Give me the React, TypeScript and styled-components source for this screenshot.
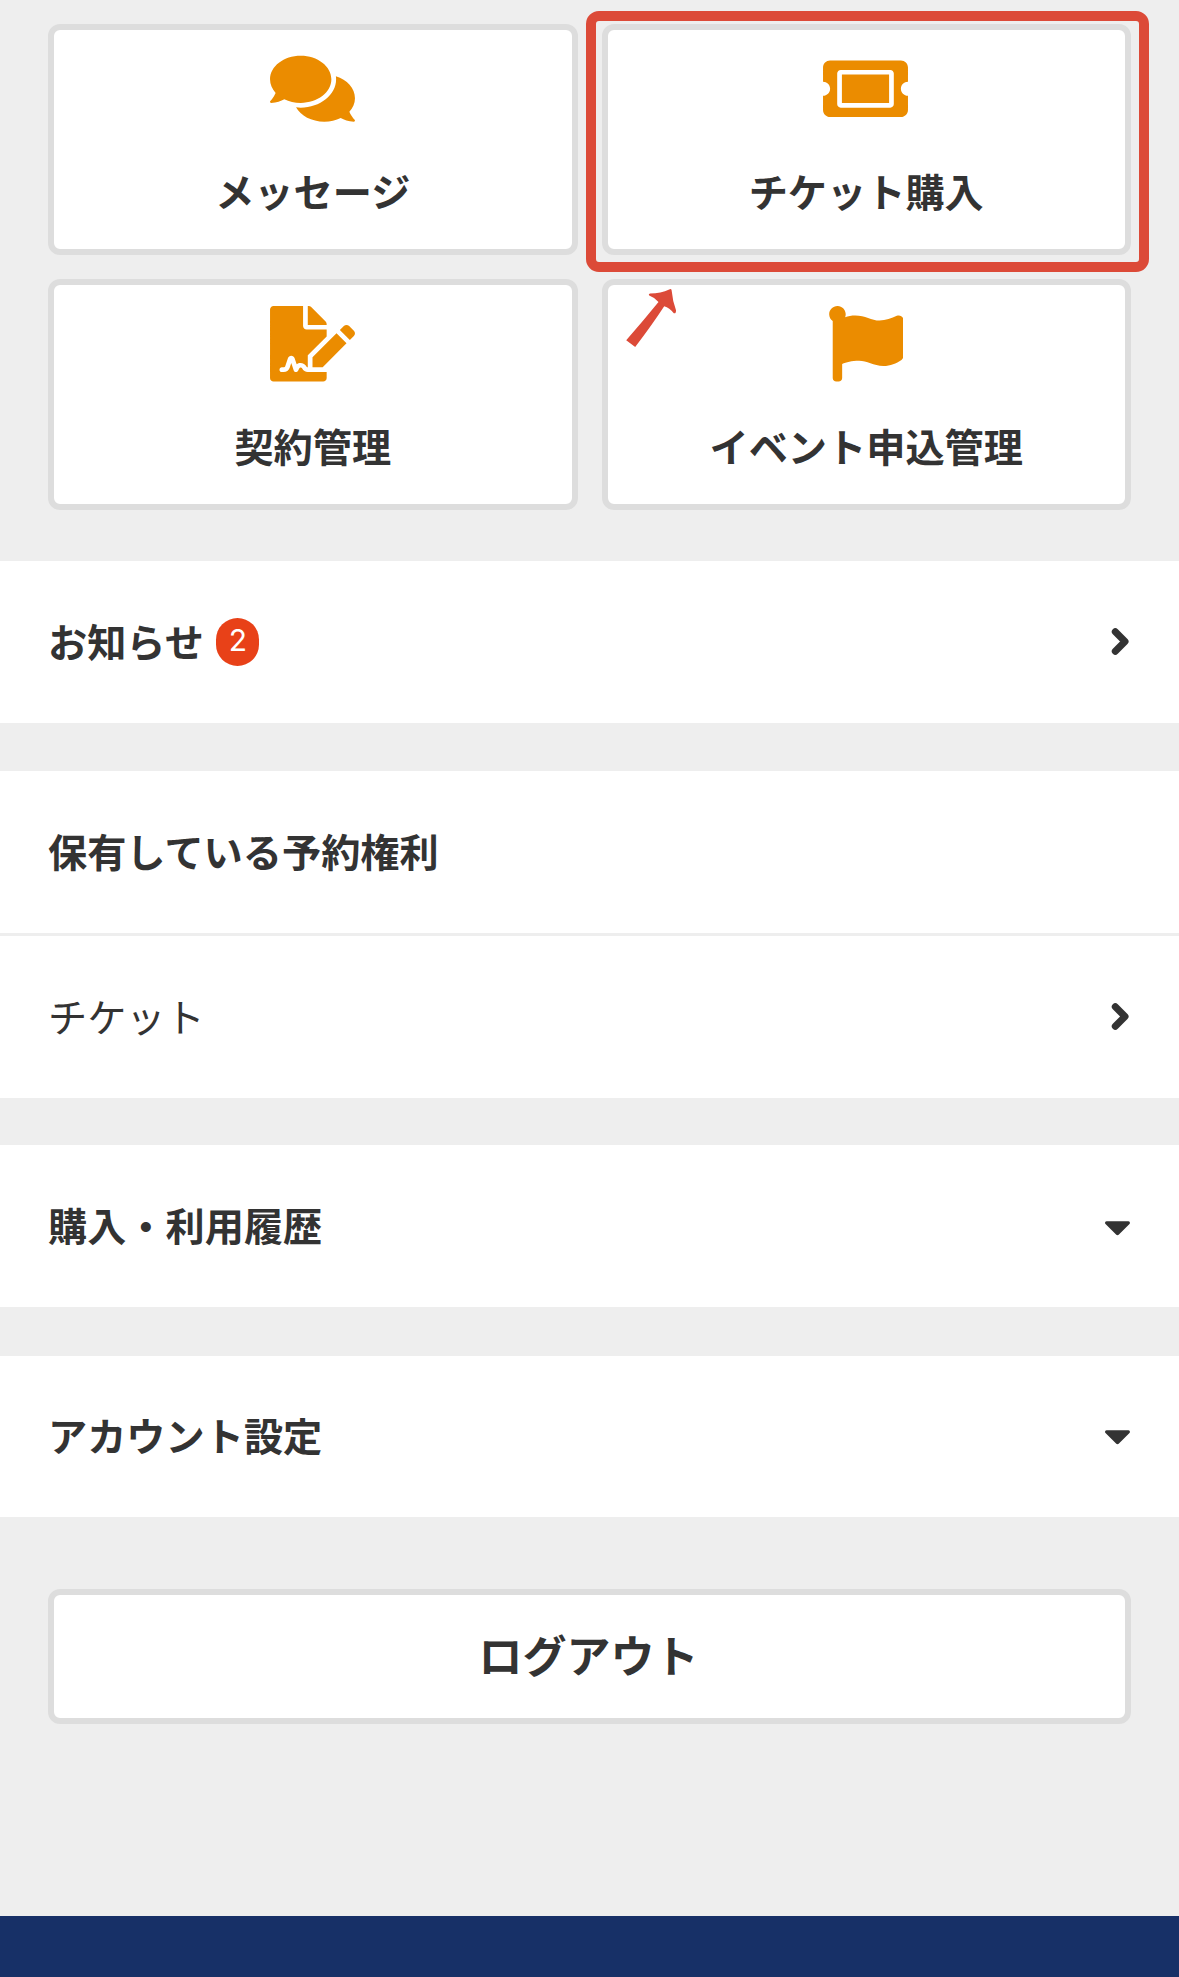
import React from "react";
import styled, { createGlobalStyle, css } from "styled-components";
import {
  FaCaretDown,
  FaComments,
  FaFileSignature,
  FaFlag,
  FaTicketAlt,
} from "react-icons/fa";

const GlobalStyle = createGlobalStyle`
  *, *::before, *::after { box-sizing: border-box; }
  body {
    margin: 0;
    background: #eee;
    color: #333;
    font-family: "Noto Sans CJK JP", sans-serif;
    font-size: 39.2px;
  }
`;

const Page = styled.div`
  display: flex;
  flex-direction: column;
  width: 1179px;
  height: 1977px;
  overflow: hidden;
  background: #eee;
`;

const Tiles = styled.nav`
  display: grid;
  grid-template-columns: 1fr 1fr;
  grid-auto-rows: 231px;
  gap: 24px;
  padding: 24px 48px 51px;
`;

const panel = css`
  background: #fff;
  border: 6px solid #ddd;
  border-radius: 12px;
`;

const Tile = styled.a`
  ${panel}
  position: relative;
  display: flex;
  flex-direction: column;
  align-items: center;
  padding-top: 21px;
  color: #eb8c00;
`;

const wideIcon = css`
  display: block;
  flex: none;
  width: 85px;
  height: 75.5px;
  margin-right: 1px;
`;

const CommentsIcon = styled(FaComments)`
  ${wideIcon}
`;
const TicketIcon = styled(FaTicketAlt)`
  ${wideIcon}
`;
const SignatureIcon = styled(FaFileSignature)`
  ${wideIcon}
`;
const FlagIcon = styled(FaFlag)`
  display: block;
  flex: none;
  width: 75.5px;
  height: 75.5px;
  margin-right: 2px;
`;

const TileLabel = styled.span`
  margin-top: 34.5px;
  color: #333;
  font-weight: 700;
  line-height: 58px;
`;

const Highlight = styled.span`
  position: absolute;
  inset: -19px -24px -23px -22px;
  border: 10px solid #dc4a38;
  border-radius: 13px;
`;

const Arrow = styled.svg`
  position: absolute;
  left: 16px;
  top: 2px;
  width: 56px;
  height: 64px;
  fill: #dc4a38;
`;

const Section = styled.section<{ $gap?: number }>`
  background: #fff;
  margin-bottom: ${(p) => p.$gap ?? 48}px;
`;

const Row = styled.div<{ $plain?: boolean; $height?: number }>`
  display: flex;
  align-items: center;
  height: ${(p) => p.$height ?? 162}px;
  padding: 0 48px;
  font-weight: ${(p) => (p.$plain ? 400 : 700)};
  line-height: 58px;

  & + & {
    height: 165px;
    border-top: 3px solid #eee;
  }
`;

const RowLabel = styled.span`
  padding-bottom: 5px;
`;

const Badge = styled.span`
  display: flex;
  justify-content: center;
  width: 43px;
  height: 48px;
  margin-left: 12.5px;
  border-radius: 22px;
  background: #e84118;
  color: #fff;
  font: 400 30px/45px Inter, sans-serif;
`;

const ChevronSvg = styled.svg`
  width: 18px;
  height: 27px;
  margin: 0 2px 2px auto;
  fill: none;
  stroke: #333;
  stroke-width: 7;
  stroke-linecap: round;
  stroke-linejoin: round;
`;

const Caret = styled(FaCaretDown)<{ $raise?: number }>`
  width: 27px;
  height: 43px;
  margin: 0 0.5px ${(p) => p.$raise ?? 0}px auto;
`;

const Logout = styled.button`
  ${panel}
  height: 135px;
  margin: 24px 48px 0;
  padding: 0 2px 6px 0;
  color: #333;
  font: 700 44px/60px "Noto Sans CJK JP", sans-serif;
`;

const Footer = styled.footer`
  height: 61px;
  margin-top: auto;
  background: #173067;
`;

function Chevron() {
  return (
    <ChevronSvg viewBox="0 0 18 27">
      <path d="M4.3 3.8 L14 13.5 L4.3 23.2" />
    </ChevronSvg>
  );
}

export default function App() {
  return (
    <>
      <GlobalStyle />
      <Page>
        <Tiles>
          <Tile>
            <CommentsIcon />
            <TileLabel>メッセージ</TileLabel>
          </Tile>
          <Tile>
            <TicketIcon />
            <TileLabel>チケット購入</TileLabel>
            <Highlight />
          </Tile>
          <Tile>
            <SignatureIcon />
            <TileLabel>契約管理</TileLabel>
          </Tile>
          <Tile>
            <FlagIcon />
            <TileLabel>イベント申込管理</TileLabel>
            <Arrow viewBox="0 0 56 64">
              <path d="M2.2 53.3 Q18.8 34.3 34.5 15 Q31 10.5 25.2 8.4 Q24 7 26 6.4 Q37 6.2 45.2 2.4 Q47.2 1.2 47.6 3.2 Q48.6 14 52 23.2 Q52.2 26.8 49.8 26.2 Q45.5 21 40.2 19.3 Q28 38 11.2 60 Z" />
            </Arrow>
          </Tile>
        </Tiles>
        <Section>
          <Row>
            <RowLabel>お知らせ</RowLabel>
            <Badge>2</Badge>
            <Chevron />
          </Row>
        </Section>
        <Section $gap={47}>
          <Row>
            <RowLabel>保有している予約権利</RowLabel>
          </Row>
          <Row $plain>
            <RowLabel>チケット</RowLabel>
            <Chevron />
          </Row>
        </Section>
        <Section $gap={49}>
          <Row>
            <RowLabel>購入・利用履歴</RowLabel>
            <Caret />
          </Row>
        </Section>
        <Section>
          <Row $height={161}>
            <RowLabel>アカウント設定</RowLabel>
            <Caret $raise={3} />
          </Row>
        </Section>
        <Logout>ログアウト</Logout>
        <Footer />
      </Page>
    </>
  );
}
